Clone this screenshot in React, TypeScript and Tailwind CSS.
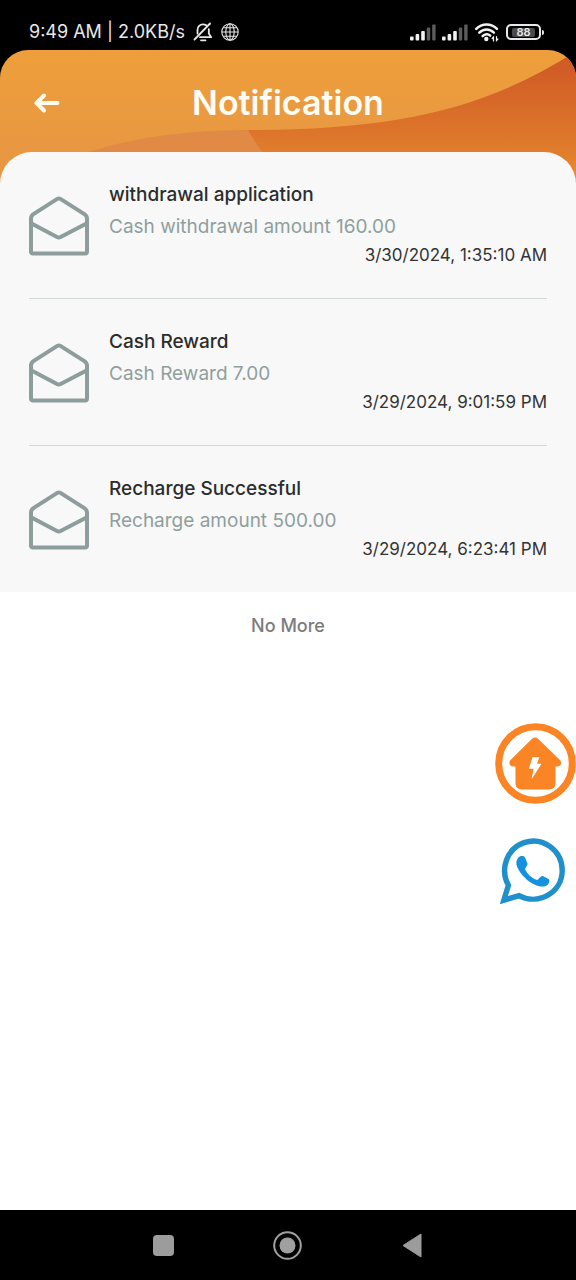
const NOTIFICATIONS = [
  {
    id: 1,
    title: "withdrawal application",
    detail: "Cash withdrawal amount 160.00",
    time: "3/30/2024, 1:35:10 AM",
  },
  {
    id: 2,
    title: "Cash Reward",
    detail: "Cash Reward 7.00",
    time: "3/29/2024, 9:01:59 PM",
  },
  {
    id: 3,
    title: "Recharge Successful",
    detail: "Recharge amount 500.00",
    time: "3/29/2024, 6:23:41 PM",
  },
];

function SignalBars() {
  return (
    <svg width="26" height="17" viewBox="0 0 26 17" aria-hidden="true">
      <g fill="#f2f2f2">
        <rect x="0" y="12.5" width="3.6" height="4" rx="1" />
        <rect x="5.6" y="10" width="3.6" height="6.5" rx="1" />
        <rect x="11.2" y="7" width="3.6" height="9.5" rx="1" />
      </g>
      <g fill="#5c5c5c">
        <rect x="16.8" y="3.5" width="3.4" height="13" rx="1" />
        <rect x="22.2" y="0.5" width="3.4" height="16" rx="1" />
      </g>
    </svg>
  );
}

function StatusBar() {
  return (
    <div className="flex h-[50px] items-end justify-between bg-black pr-8 pb-2 pl-[29px] text-[#e8e8e8]">
      <div className="flex items-center">
        <span className="text-lg leading-5">9:49 AM | 2.0KB/s</span>
        <svg className="ml-2" width="20" height="20" viewBox="0 0 20 20" fill="none" stroke="currentColor" strokeWidth="1.8" strokeLinecap="round" strokeLinejoin="round" aria-hidden="true">
          <path d="M1.5 17.5 17 1.5" />
          <path d="M4.5 11.5V8C4.5 4.5 7 2.3 10 2.3c1.3 0 2.4.4 3.3 1" />
          <path d="M15.8 7.2v4.3l2.4 3.7H7" />
          <path d="M8 18.3h4.5" />
        </svg>
        <svg className="ml-2" width="18" height="20" viewBox="0 0 18 20" fill="none" stroke="currentColor" strokeWidth="1.1" aria-hidden="true">
          <circle cx="9" cy="10" r="8.2" />
          <ellipse cx="9" cy="10" rx="4.2" ry="8.2" />
          <path d="M9 1.8v16.4M.8 10h16.4M2.2 5.7h13.6M2.2 14.3h13.6" />
        </svg>
      </div>
      <div className="flex items-center gap-[6px]">
        <SignalBars />
        <SignalBars />
        <svg width="26" height="20" viewBox="0 0 26 20" fill="none" stroke="#f2f2f2" strokeWidth="2.5" strokeLinecap="round" aria-hidden="true">
          <path d="M2.2 6.8C8 .9 17.2 .9 23 6.8" />
          <path d="M5.3 10.6C9.5 6.3 15.7 6.3 19.9 10.6" />
          <path d="M8.6 14.1C10.8 11.7 14.2 11.7 16.2 13.6" />
          <circle cx="12.3" cy="17" r="2.2" fill="#f2f2f2" stroke="none" />
          <path d="M19.5 19v-4l-1.4 1.5M22.500 14.500v4l1.400-1.500" strokeWidth="1.2" />
        </svg>
        <div className="flex items-center gap-px">
          <div className="flex h-4 w-[35px] items-center rounded-[5px] border-2 border-[#e8e8e8] px-1 py-[2px]">
            <span className="w-full rounded-xs bg-[#4a4a4a] text-center text-[11px] leading-[9px] font-semibold">88</span>
          </div>
          <span className="h-[5px] w-[2px] rounded-r-xs bg-[#e8e8e8]" />
        </div>
      </div>
    </div>
  );
}

function HeaderBackground() {
  return (
    <svg className="absolute inset-0 h-full w-full" viewBox="0 0 576 136" preserveAspectRatio="none" aria-hidden="true">
      <defs>
        <linearGradient id="amber" x1="0" y1="0" x2="0" y2="1">
          <stop offset="0" stopColor="#ee9f3b" />
          <stop offset="1" stopColor="#e69543" />
        </linearGradient>
        <linearGradient id="rust" gradientUnits="userSpaceOnUse" x1="0" y1="18" x2="0" y2="136">
          <stop offset="0" stopColor="#d15c26" />
          <stop offset="0.7" stopColor="#e07c2c" />
          <stop offset="1" stopColor="#ee9030" />
        </linearGradient>
      </defs>
      <rect width="576" height="136" fill="url(#amber)" />
      <path d="M82 104C130 88 185 80 248 80L270 104Z" fill="#e08a46" />
      <path d="M248 80C400 80 490 57 576 1V136H292C274 116 260 102 248 80Z" fill="url(#rust)" />
    </svg>
  );
}

function EnvelopeIcon() {
  return (
    <svg className="mt-[15px] shrink-0" width="60" height="60" viewBox="0 0 60 60" fill="none" stroke="#8c9d9c" strokeWidth="4" strokeLinejoin="round" strokeLinecap="round" aria-hidden="true">
      <path d="M2 22.5C2 20.5 2.7 19.3 4.4 18.1L28.3 2.9C29.4 2.2 30.3 2.2 31.4 2.9L55.4 18.1C57.2 19.3 58 20.5 58 22.5V55.5C58 56.8 57.3 57.5 56 57.500H4C2.700 57.500 2 56.800 2 55.500Z" />
      <path d="M2.500 27.500 28 41Q29.800 42 31.600 41L57.500 27.500" />
    </svg>
  );
}

function HouseIcon() {
  return (
    <svg width="81" height="81" viewBox="0 0 81 81" aria-hidden="true">
      <circle cx="40.5" cy="40.5" r="36.8" fill="#fff" stroke="#fb8424" strokeWidth="7" />
      <path d="M36.8 16Q40 13.2 43.2 16L64.5 36.5C67.5 39.5 66 43.5 62 43.5H60.5V60Q60.5 66.5 54 66.5H27Q20.5 66.5 20.5 60V43.5H18.5C14.5 43.5 13 39.5 16 36.5Z" fill="#fb8424" />
      <path d="M37.5 34.2H44.3L42 40.8H46.5L36.5 56.5L38.6 45.8H33.8Z" fill="#fff" />
    </svg>
  );
}

function WhatsAppIcon() {
  return (
    <svg width="66" height="66" viewBox="0 0 66 66" aria-hidden="true">
      <path d="M3.8 62.2 8.4 47.2C-.5 31 7 10.5 24 4.6C43-1.8 62.2 12.5 62.2 32.5C62.2 54.5 38.5 68 19 57.6Z" fill="#fff" stroke="#2090cd" strokeWidth="5.4" />
      <path d="M18.5 19.5C20.5 17.7 23.8 17.5 25 19.6L27.4 25.2C28 27.5 25.5 29.3 25 31C27 35.8 31.8 40.3 37 42C38.8 41.4 40.5 37.6 42.8 38L48.5 40.9C50.4 42.1 49 45.5 47.3 46.9C44.4 49.3 40 48.9 36 47.2C27.5 43.7 20.5 36.5 17.2 29C15.8 25.7 16 22 18.5 19.5Z" fill="#1592df" />
    </svg>
  );
}

export default function App() {
  return (
    <div className="flex min-h-screen flex-col bg-white font-[Inter,sans-serif]">
      <StatusBar />

      <div className="bg-black">
        <header className="relative overflow-hidden rounded-t-[28px] px-[29px] pt-[29px] pb-[59px]">
          <HeaderBackground />
          <div className="relative grid grid-cols-[36px_1fr_36px] items-center">
            <button aria-label="Back" className="flex h-9 w-9 items-center justify-center text-[#fffbee]">
              <svg width="26" height="20" viewBox="0 0 26 20" fill="none" stroke="currentColor" strokeWidth="4" strokeLinecap="round" strokeLinejoin="round" aria-hidden="true">
                <path d="M10 2.500 2.500 10l7.500 7.500M3 10h20.500" />
              </svg>
            </button>
            <h1 className="text-center text-[34px] leading-[48px] font-semibold text-[#fffdf5]">Notification</h1>
          </div>
        </header>
      </div>

      <main className="relative -mt-[34px] flex-1">
        <ul className="rounded-t-[32px] bg-[#f8f8f8] px-[29px]">
          {NOTIFICATIONS.map((item) => (
            <li key={item.id} className="flex items-start gap-5 border-b border-[#cfd6d8] py-[29px] last:border-b-0">
              <EnvelopeIcon />
              <div className="min-w-0 flex-1 text-[19px] leading-7">
                <h2 className="font-medium text-[#2c2c2c]">{item.title}</h2>
                <p className="mt-1 text-[#8f9f9d]">{item.detail}</p>
                <p className="text-right text-[17px] leading-7 text-[#333333]">{item.time}</p>
              </div>
            </li>
          ))}
        </ul>
        <p className="mt-5 text-center text-lg leading-7 font-medium text-[#7c7c7c]">No More</p>

        {/* Floating shortcuts */}
        <div className="absolute top-[571px] right-0 flex flex-col items-end gap-[34px]">
          <button aria-label="Home">
            <HouseIcon />
          </button>
          <a href="#whatsapp" aria-label="WhatsApp" className="mr-[10px]">
            <WhatsAppIcon />
          </a>
        </div>
      </main>

      <nav className="grid h-[70px] grid-cols-[1fr_124px_124px_1fr] items-center bg-black">
        <button aria-label="Recent apps" className="mr-[-10px] justify-self-end">
          <span className="block h-[21px] w-[21px] rounded-sm bg-[#9c9c9c]" />
        </button>
        <button aria-label="Home screen" className="col-start-2 mr-[-14px] justify-self-end">
          <svg width="29" height="29" viewBox="0 0 29 29" aria-hidden="true">
            <circle cx="14.5" cy="14.5" r="13.3" fill="none" stroke="#a0a0a0" strokeWidth="2" />
            <circle cx="14.5" cy="14.5" r="8" fill="#a0a0a0" />
          </svg>
        </button>
        <button aria-label="Go back" className="col-start-3 mr-[-10px] justify-self-end">
          <svg width="20" height="25" viewBox="0 0 20 25" aria-hidden="true">
            <path d="M19 1v23L1 12.5Z" fill="#9c9c9c" stroke="#9c9c9c" strokeLinejoin="round" />
          </svg>
        </button>
      </nav>
    </div>
  );
}
